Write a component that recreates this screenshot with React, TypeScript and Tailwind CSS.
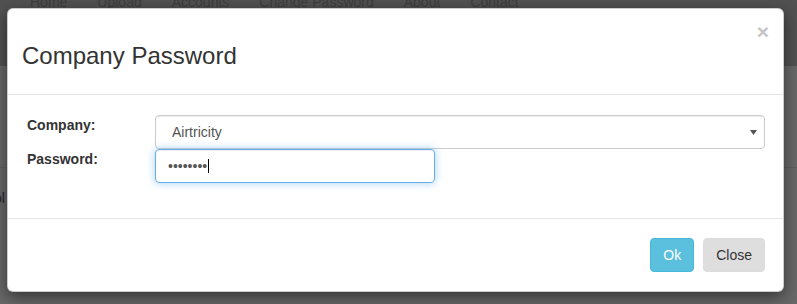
import React from "react";

const navLinks = ["Home", "Upload", "Accounts", "Change Password", "About", "Contact"];

function Backdrop() {
  return (
    <div className="flex h-full w-full flex-col bg-[#686868]">
      {/* page navbar, dimmed by the modal overlay */}
      <div className="h-[66px] bg-[#515151]">
        <ul className="-mt-[8px] flex pl-[15px] text-[14px] leading-[20px] text-[#3d3d3d]">
          {navLinks.map((link) => (
            <li key={link} className="px-[15px]">
              {link}
            </li>
          ))}
        </ul>
      </div>
      <div className="mt-[101px] border-t border-[#5e5e5e]" />
      <div className="-ml-[6px] mt-[20px] text-[14px] leading-[20px] text-[#262626]">ol</div>
    </div>
  );
}

function CompanyPasswordModal() {
  return (
    <div className="absolute left-[7px] top-[8px] flex w-[777px] flex-col rounded-[6px] border border-black/20 bg-white shadow-[0_5px_15px_rgba(0,0,0,0.5)]">
      <button className="absolute right-[14px] top-[12px] text-[21px] font-bold leading-none text-[#c5c5c5]">
        ×
      </button>

      {/* Header */}
      <div className="border-b border-[#e5e5e5] px-[14px] pb-[25px] pt-[34px]">
        <h3 className="text-[24px] leading-[26px] text-[#333]">Company Password</h3>
      </div>

      {/* Body */}
      <div className="pb-[35px] pl-[19px] pr-[18px] pt-[20px]">
        <div className="grid grid-cols-[128px_1fr] text-[14px] leading-[20px] text-[#333]">
          <label className="font-bold">Company:</label>
          <div className="flex h-[34px] items-center justify-between rounded-[4px] border border-[#ccc] pl-[16px] pr-[7px] text-[#555] shadow-[inset_0_1px_1px_rgba(0,0,0,0.075)]">
            <span>Airtricity</span>
            <svg width="7" height="5" viewBox="0 0 7 5">
              <path d="M0 0h7L3.5 5z" fill="#555" />
            </svg>
          </div>

          <label className="font-bold">Password:</label>
          <div className="flex h-[34px] w-[280px] items-center rounded-[4px] border border-[#66afe9] pl-[12px] text-[#555] shadow-[inset_0_1px_1px_rgba(0,0,0,0.075),0_0_8px_rgba(102,175,233,0.6)]">
            <span>••••••••</span>
            <span className="ml-[1px] h-[14px] w-px bg-black" />
          </div>
        </div>
      </div>

      {/* Footer */}
      <div className="flex justify-end gap-[9px] border-t border-[#e5e5e5] pb-[19px] pl-[19px] pr-[18px] pt-[19px]">
        <button className="h-[34px] rounded-[4px] border border-[#46b8da] bg-[#5bc0de] px-[12px] text-[14px] text-white">
          Ok
        </button>
        <button className="h-[34px] rounded-[4px] border border-[#dcdcdc] bg-[#dedede] px-[12px] text-[14px] text-[#333]">
          Close
        </button>
      </div>
    </div>
  );
}

export default function App() {
  return (
    <div className="relative h-[304px] w-[797px] overflow-hidden font-['Liberation_Sans',Arial,sans-serif]">
      <Backdrop />
      <CompanyPasswordModal />
    </div>
  );
}
